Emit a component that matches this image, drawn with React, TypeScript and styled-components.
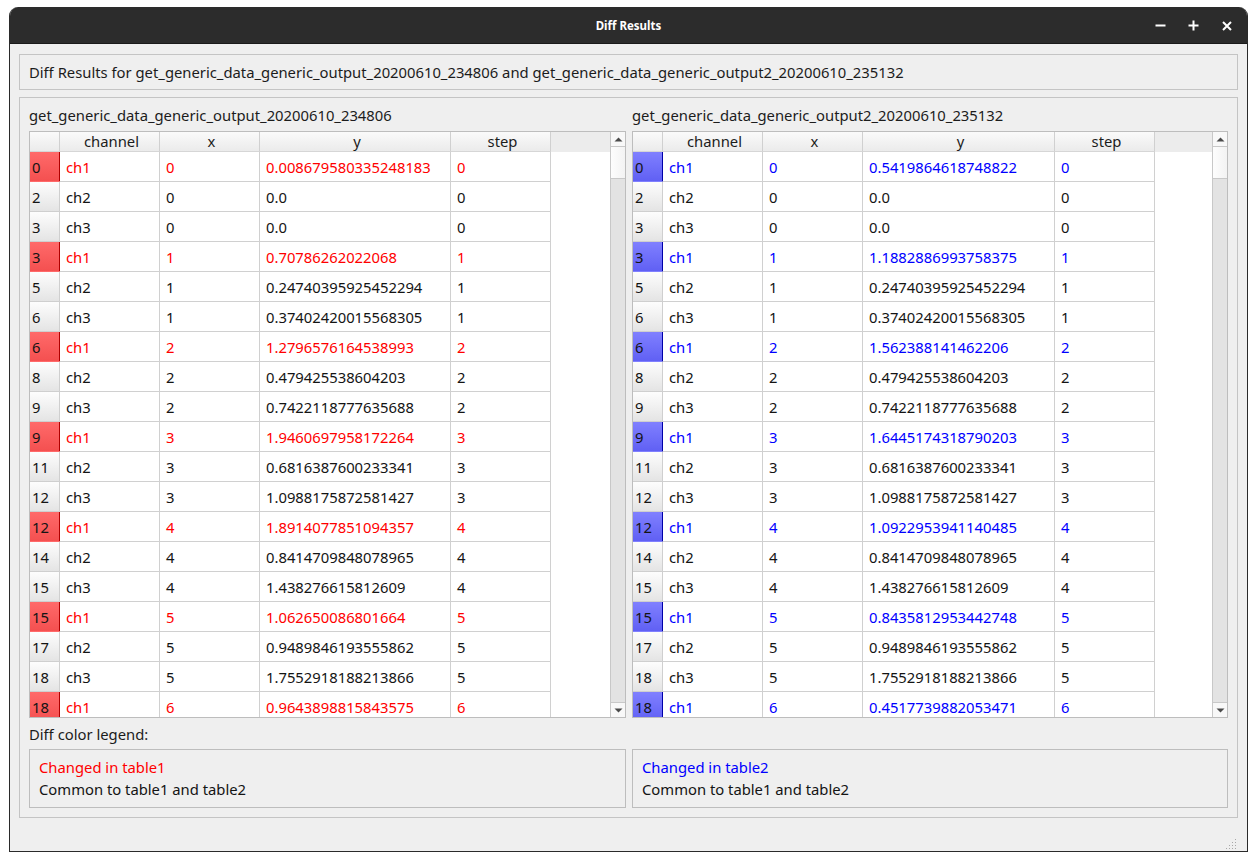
import React from "react";
import styled, { createGlobalStyle } from "styled-components";

const GlobalStyle = createGlobalStyle`
  html, body {
    margin: 0;
    padding: 0;
    background: #ffffff;
  }
  body {
    font-family: "Noto Sans", "DejaVu Sans", sans-serif;
    font-size: 14.8px;
    color: #1c1c1c;
  }
  * { box-sizing: border-box; }
`;

type Row = { id: string; ch: string; x: string; y: string; step: string; changed?: boolean };

const common: Record<number, string> = {
  1: "0.0",
  2: "0.0",
  4: "0.24740395925452294",
  5: "0.37402420015568305",
  7: "0.479425538604203",
  8: "0.7422118777635688",
  10: "0.6816387600233341",
  11: "1.0988175872581427",
  13: "0.8414709848078965",
  14: "1.438276615812609",
  16: "0.9489846193555862",
  17: "1.7552918188213866",
};

const ids = ["0", "2", "3", "3", "5", "6", "6", "8", "9", "9", "11", "12", "12", "14", "15", "15", "17", "18", "18"];

const makeRows = (changedY: string[]): Row[] =>
  ids.map((id, i) => {
    const step = String(Math.floor(i / 3));
    const ch = "ch" + ((i % 3) + 1);
    if (i % 3 === 0) return { id, ch, x: step, y: changedY[i / 3], step, changed: true };
    return { id, ch, x: step, y: common[i], step };
  });

const leftRows = makeRows([
  "0.008679580335248183",
  "0.70786262022068",
  "1.2796576164538993",
  "1.9460697958172264",
  "1.8914077851094357",
  "1.062650086801664",
  "0.9643898815843575",
]);

const rightRows = makeRows([
  "0.5419864618748822",
  "1.1882886993758375",
  "1.562388141462206",
  "1.6445174318790203",
  "1.0922953941140485",
  "0.8435812953442748",
  "0.4517739882053471",
]);

const Window = styled.div`
  margin: 7px 0 0 9px;
  width: 1239px;
  height: 845px;
  border: 1px solid #2a2a2a;
  border-top: none;
  border-radius: 9px 9px 0 0;
  overflow: hidden;
  background: #efefef;
  display: flex;
  flex-direction: column;
`;

const TitleBar = styled.div`
  height: 37px;
  flex-shrink: 0;
  background: #2c2c2c;
  display: grid;
  grid-template-columns: 1fr auto 1fr;
  align-items: center;
  border-bottom: 1px solid #1a1a1a;
`;

const Title = styled.div`
  grid-column: 2;
  color: #ffffff;
  font-weight: bold;
  font-size: 11.5px;
`;

const Controls = styled.div`
  grid-column: 3;
  justify-self: end;
  display: flex;
  padding-right: 3px;
`;

const ControlButton = styled.div`
  width: 33.5px;
  height: 37px;
  display: flex;
  align-items: center;
  justify-content: center;
`;

const Body = styled.div`
  flex: 1;
  display: flex;
  flex-direction: column;
  padding: 10px 9px 0 9px;
`;

const HeaderFrame = styled.div`
  height: 36px;
  border: 1px solid #c4c4c4;
  padding: 0 9px;
  display: flex;
  align-items: center;
  white-space: nowrap;
`;

const MainGroup = styled.div`
  margin-top: 7px;
  height: 721px;
  border: 1px solid #c4c4c4;
  padding: 6px 9px 9px 9px;
  display: flex;
  flex-direction: column;
`;

const TwoCols = styled.div`
  display: grid;
  grid-template-columns: 597px 596px;
  column-gap: 6px;
`;

const TableLabel = styled.div`
  height: 22px;
  line-height: 22px;
  margin-bottom: 5px;
  white-space: nowrap;
`;

const TableFrame = styled.div`
  height: 587px;
  border: 1px solid #bdbdbd;
  display: flex;
  background: #ffffff;
  overflow: hidden;
`;

const TableView = styled.div`
  flex: 1;
  overflow: hidden;
  display: flex;
  flex-direction: column;
`;

const HeaderRow = styled.div`
  height: 20px;
  flex-shrink: 0;
  display: flex;
  background: #ececec;
`;

const Row = styled.div`
  height: 30px;
  flex-shrink: 0;
  display: flex;
`;

const HeadCell = styled.div<{ $w: number }>`
  width: ${({ $w }) => $w}px;
  flex-shrink: 0;
  height: 20px;
  line-height: 19px;
  padding-left: 4px;
  text-align: center;
  background: linear-gradient(#fafafa, #ebebeb);
  border-right: 1px solid #d0d0d0;
  border-bottom: 1px solid #d6d6d6;
`;

const Corner = styled.div`
  width: 30px;
  flex-shrink: 0;
  height: 20px;
  background: linear-gradient(#fafafa, #ebebeb);
  border-right: 1px solid #d0d0d0;
  border-bottom: 1px solid #d6d6d6;
`;

const RowHead = styled.div<{ $mark?: "red" | "blue" }>`
  width: 30px;
  flex-shrink: 0;
  height: 30px;
  padding: 1px 0 0 2px;
  display: flex;
  align-items: center;
  color: #141414;
  background: ${({ $mark }) =>
    $mark === "red"
      ? "linear-gradient(#ff6a6a, #f45050)"
      : $mark === "blue"
      ? "linear-gradient(#8080ff, #6060f4)"
      : "linear-gradient(#fdfdfd, #e4e4e4)"};
  border-right: 1px solid
    ${({ $mark }) => ($mark === "red" ? "#b00000" : $mark === "blue" ? "#0000a8" : "#cfcfcf")};
  border-bottom: 1px solid ${({ $mark }) => ($mark ? "transparent" : "#cfcfcf")};
`;

const Cell = styled.div<{ $w: number; $color?: string }>`
  width: ${({ $w }) => $w}px;
  flex-shrink: 0;
  height: 30px;
  padding: 0 0 0 6px;
  display: flex;
  align-items: center;
  white-space: nowrap;
  color: ${({ $color }) => $color || "#141414"};
  border-right: 1px solid #d0d0d0;
  border-bottom: 1px solid #d0d0d0;
`;

const ScrollBar = styled.div`
  width: 15px;
  flex-shrink: 0;
  display: flex;
  flex-direction: column;
  background: #e3e3e3;
  border-left: 1px solid #c8c8c8;
`;

const ScrollButton = styled.div`
  height: 15px;
  flex-shrink: 0;
  background: #f8f8f8;
  display: flex;
  align-items: center;
  justify-content: center;
  border-bottom: 1px solid #c8c8c8;
  &:last-child {
    border-bottom: none;
    border-top: 1px solid #c8c8c8;
  }
`;

const Thumb = styled.div`
  height: 32px;
  flex-shrink: 0;
  background: linear-gradient(90deg, #fdfdfd, #f3f3f3);
  border-bottom: 1px solid #c8c8c8;
`;

const Track = styled.div`
  flex: 1;
`;

const LegendLabel = styled.div`
  margin-top: 7px;
  height: 19px;
  line-height: 19px;
  margin-bottom: 5px;
`;

const LegendBox = styled.div`
  height: 59px;
  border: 1px solid #bdbdbd;
  padding: 6px 9px 0 9px;
`;

const LegendLine = styled.div<{ $color?: string }>`
  height: 22px;
  line-height: 22px;
  color: ${({ $color }) => $color || "#141414"};
`;

const Footer = styled.div`
  flex: 1;
  display: flex;
  align-items: flex-end;
  justify-content: flex-end;
  padding: 0 2px 2px 0;
`;

const Arrow = ({ down }: { down?: boolean }) => (
  <svg width="9" height="5" viewBox="0 0 9 5">
    <path d={down ? "M0.5 0.5H8.5L4.5 4.5Z" : "M0.5 4.5H8.5L4.5 0.5Z"} fill="#4a4a4a" />
  </svg>
);

const Grip = () => (
  <svg width="10" height="10" viewBox="0 0 10 10">
    {[
      [9, 1], [9, 4], [6, 4], [9, 7], [6, 7], [3, 7], [9, 10], [6, 10], [3, 10], [0, 10],
    ].map(([x, y], i) => (
      <rect key={i} x={x} y={y - 1} width="1" height="1" fill="#a8a8a8" />
    ))}
  </svg>
);

const DataTable = ({ rows, mark, yWidth }: { rows: Row[]; mark: "red" | "blue"; yWidth: number }) => {
  const color = mark === "red" ? "#ff0000" : "#0000ff";
  return (
    <TableFrame>
      <TableView>
        <HeaderRow>
          <Corner />
          <HeadCell $w={100}>channel</HeadCell>
          <HeadCell $w={100}>x</HeadCell>
          <HeadCell $w={yWidth}>y</HeadCell>
          <HeadCell $w={100}>step</HeadCell>
        </HeaderRow>
        {rows.map((r, i) => {
          const c = r.changed ? color : undefined;
          return (
            <Row key={i}>
              <RowHead $mark={r.changed ? mark : undefined}>{r.id}</RowHead>
              <Cell $w={100} $color={c}>{r.ch}</Cell>
              <Cell $w={100} $color={c}>{r.x}</Cell>
              <Cell $w={yWidth} $color={c}>{r.y}</Cell>
              <Cell $w={100} $color={c}>{r.step}</Cell>
            </Row>
          );
        })}
      </TableView>
      <ScrollBar>
        <ScrollButton>
          <Arrow />
        </ScrollButton>
        <Thumb />
        <Track />
        <ScrollButton>
          <Arrow down />
        </ScrollButton>
      </ScrollBar>
    </TableFrame>
  );
};

export default function App() {
  return (
    <>
      <GlobalStyle />
      <Window>
        <TitleBar>
          <Title>Diff Results</Title>
          <Controls>
            <ControlButton>
              <svg width="11" height="11" viewBox="0 0 11 11">
                <path d="M0.5 5.5H10.5" stroke="#fff" strokeWidth="2" />
              </svg>
            </ControlButton>
            <ControlButton>
              <svg width="11" height="11" viewBox="0 0 11 11">
                <path d="M0.5 5.5H10.5M5.5 0.5V10.5" stroke="#fff" strokeWidth="2" />
              </svg>
            </ControlButton>
            <ControlButton>
              <svg width="10" height="10" viewBox="0 0 10 10">
                <path d="M1 1L9 9M9 1L1 9" stroke="#fff" strokeWidth="2" />
              </svg>
            </ControlButton>
          </Controls>
        </TitleBar>
        <Body>
          <HeaderFrame>
            Diff Results for get_generic_data_generic_output_20200610_234806 and get_generic_data_generic_output2_20200610_235132
          </HeaderFrame>
          <MainGroup>
            <TwoCols>
              <div>
                <TableLabel>get_generic_data_generic_output_20200610_234806</TableLabel>
                <DataTable rows={leftRows} mark="red" yWidth={191} />
              </div>
              <div>
                <TableLabel>get_generic_data_generic_output2_20200610_235132</TableLabel>
                <DataTable rows={rightRows} mark="blue" yWidth={192} />
              </div>
            </TwoCols>
            <LegendLabel>Diff color legend:</LegendLabel>
            <TwoCols>
              <LegendBox>
                <LegendLine $color="#ff0000">Changed in table1</LegendLine>
                <LegendLine>Common to table1 and table2</LegendLine>
              </LegendBox>
              <LegendBox>
                <LegendLine $color="#0000ff">Changed in table2</LegendLine>
                <LegendLine>Common to table1 and table2</LegendLine>
              </LegendBox>
            </TwoCols>
          </MainGroup>
          <Footer>
            <Grip />
          </Footer>
        </Body>
      </Window>
    </>
  );
}
